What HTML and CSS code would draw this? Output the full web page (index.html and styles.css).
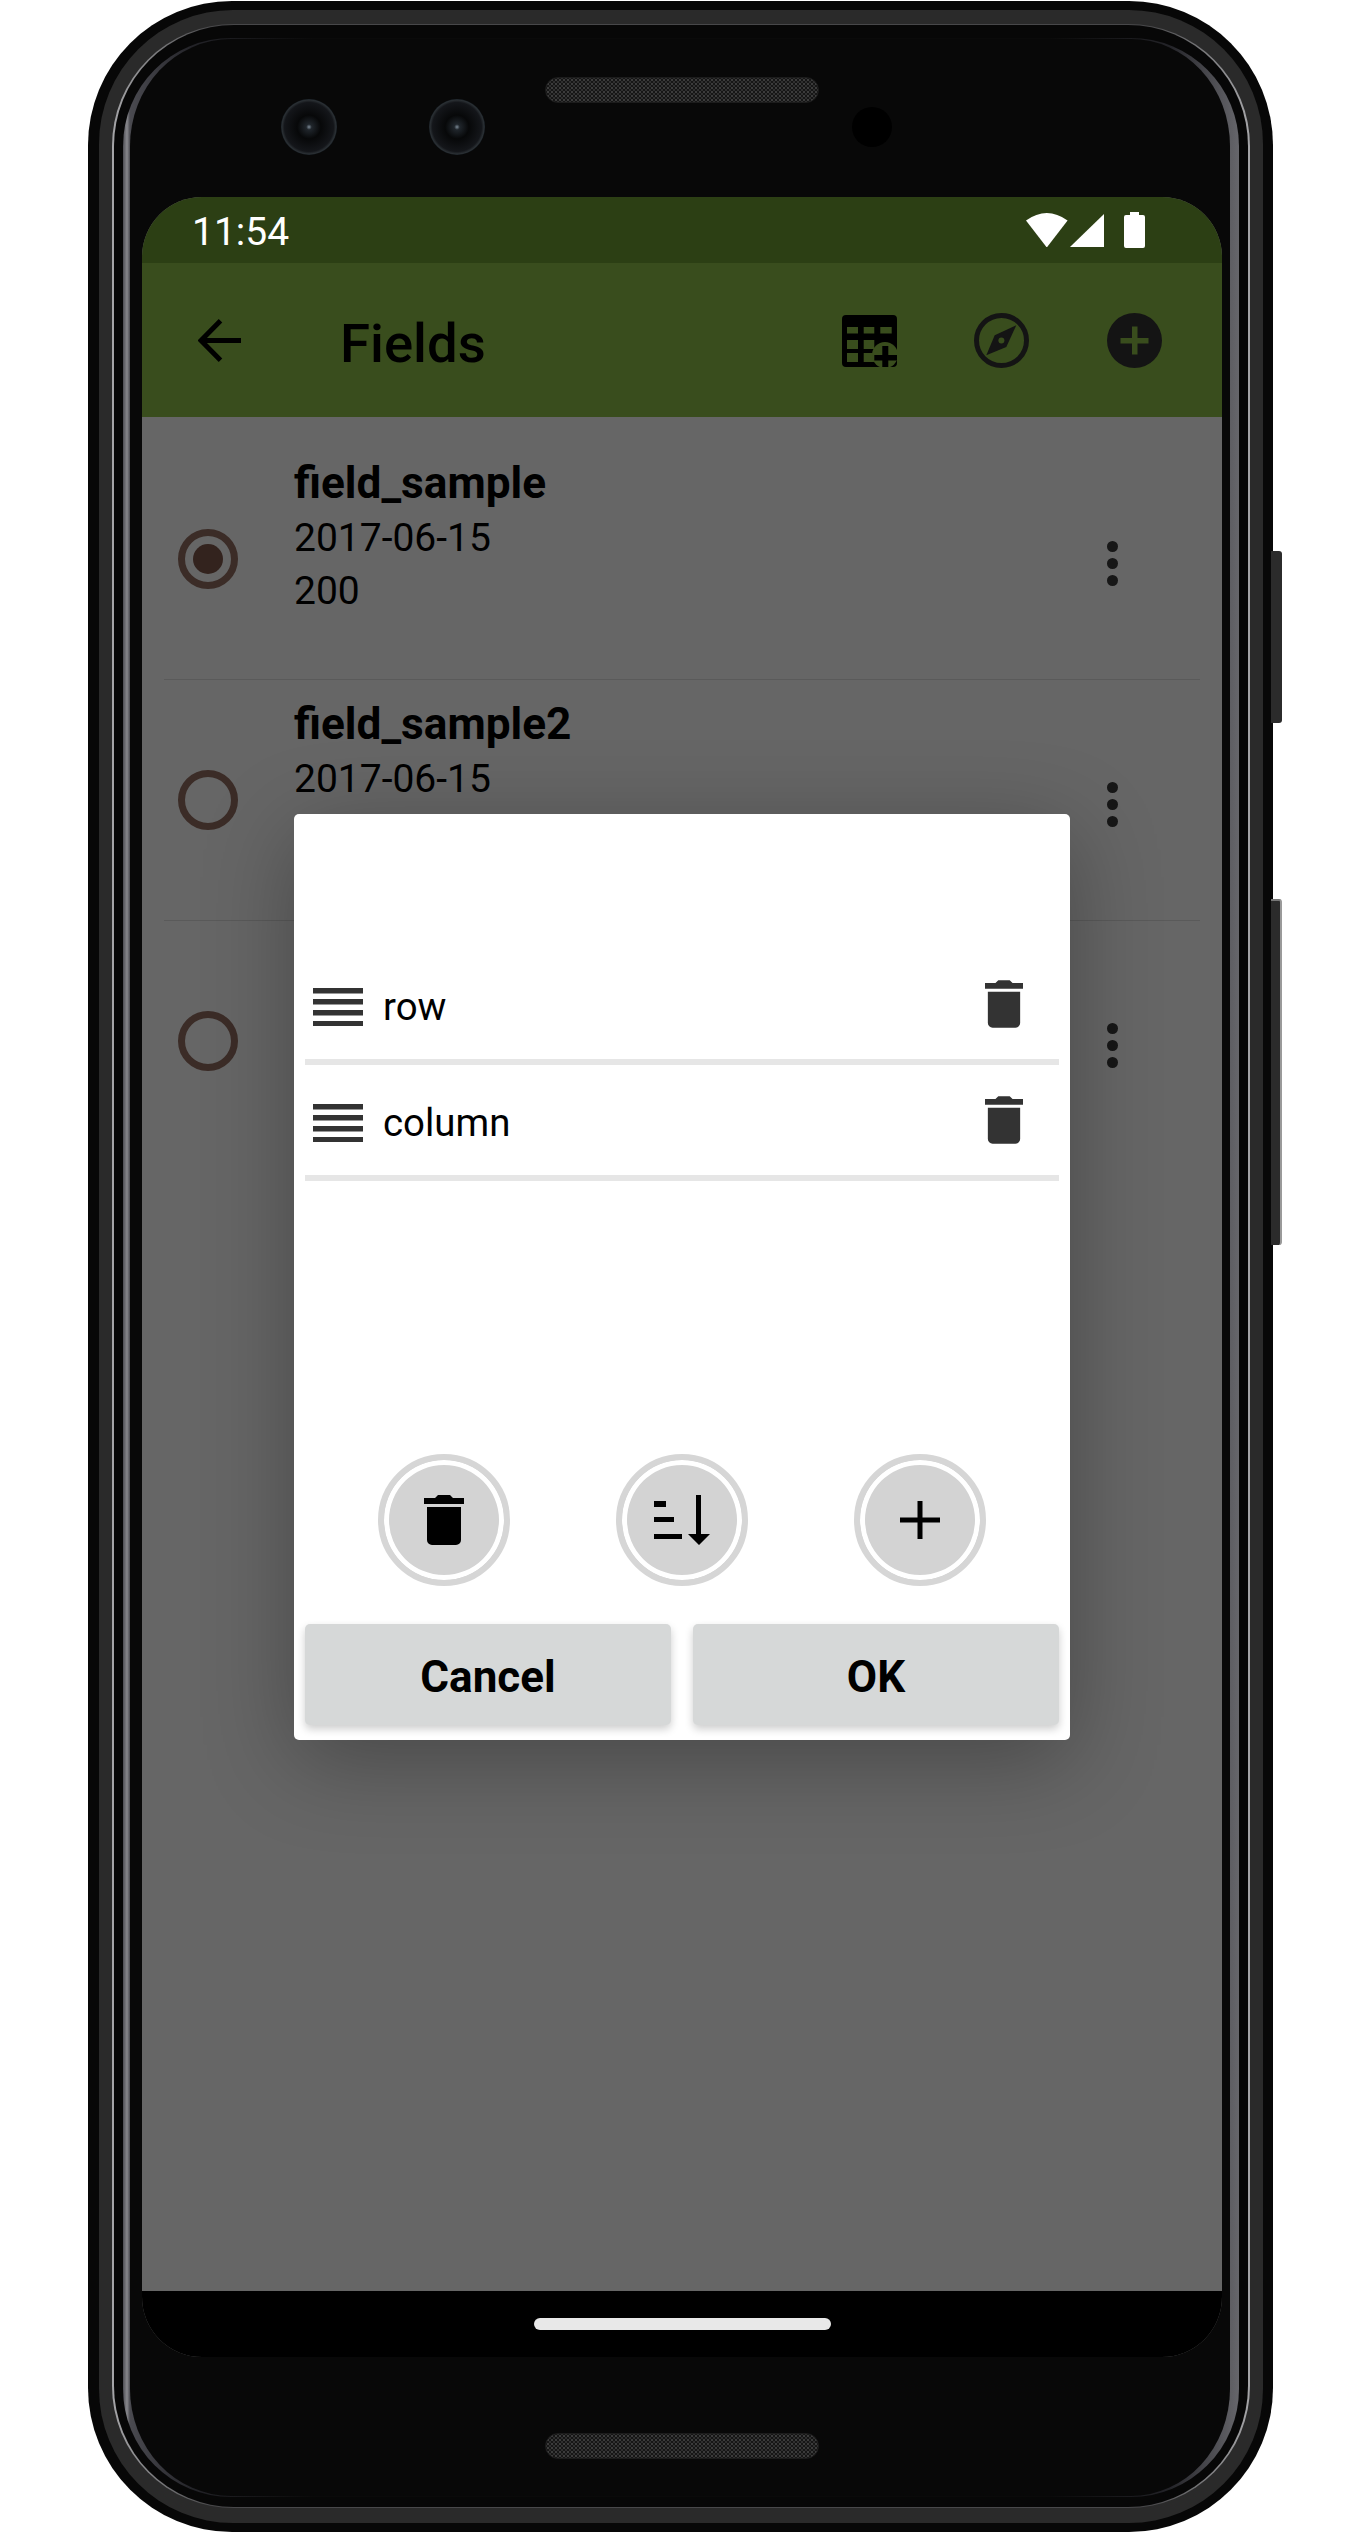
FILE: index.html
```html
<!DOCTYPE html>
<html lang="en">
<head>
    <meta charset="UTF-8">
    <meta name="viewport" content="width=device-width, initial-scale=1.0">
    <title>Fields</title>
    <link rel="stylesheet" href="styles.css">
</head>
<body>
    <div class="phone">
        <div class="side-key side-key-power"></div>
        <div class="side-key side-key-volume"></div>
        <div class="band">
            <div class="rim">
                <div class="glass">
                    <div class="bezel-top">
                        <div class="camera"></div>
                        <div class="camera camera-second"></div>
                        <div class="speaker"></div>
                        <div class="sensor"></div>
                    </div>

                    <div class="screen">
                        <div class="status-bar">
                            <span class="clock">11:54</span>
                            <div class="status-icons">
                                <svg class="icon-wifi" viewBox="0 0 41.6 34.5"><path d="M20.8 34.5L0 7.5Q20.8-7.5 41.6 7.5Z"/></svg>
                                <svg class="icon-signal" viewBox="0 0 34 33"><path d="M0 33L34 0V33Z"/></svg>
                                <svg class="icon-battery" viewBox="0 0 21 36"><path d="M6 0h9v3h4a2 2 0 0 1 2 2v29a2 2 0 0 1-2 2H2a2 2 0 0 1-2-2V5a2 2 0 0 1 2-2h4z"/></svg>
                            </div>
                        </div>

                        <header class="toolbar">
                            <svg class="icon-back" viewBox="0 0 43 43"><path d="M43 21.5H4M22.5 1.8L3 21.5l19.5 19.7" fill="none" stroke="#000" stroke-width="5"/></svg>
                            <h1 class="toolbar-title">Fields</h1>
                            <svg class="icon-table" viewBox="0 0 55 52">
                                <path fill-rule="evenodd" d="M4 0h47a4 4 0 0 1 4 4v44a4 4 0 0 1-4 4H4a4 4 0 0 1-4-4V4a4 4 0 0 1 4-4zM5 12v6.500h11V12zM21.700 12v6.500h10.600V12zM38.300 12v6.500h11.400V12zM5 25v9h11v-9zM21.700 25v9h10.600v-9zM5 38v9h11v-9zM21.700 38v9h10.600v-9z"/>
                                <circle cx="43" cy="40" r="13" fill="#394d1d"/>
                                <path d="M40.300 31h6v9h8.700v5.500h-8.700V52.600h-6V45.500H32.300V40h8z"/>
                            </svg>
                            <svg class="icon-compass" viewBox="0 0 55 55">
                                <circle cx="27.500" cy="27.500" r="25" fill="none" stroke="#141414" stroke-width="5"/>
                                <path d="M42.300 12.300L32.300 34 12.300 42.300 20.700 22.300Z" fill="#141414"/>
                                <circle cx="27.400" cy="27.400" r="3" fill="#394d1d"/>
                            </svg>
                            <svg class="icon-add" viewBox="0 0 55 55">
                                <circle cx="27.500" cy="27.500" r="27.500" fill="#141414"/>
                                <path d="M13.500 25h28v5.500h-28zM25 13.500h5.500v28H25z" fill="#394d1d"/>
                            </svg>
                        </header>

                        <main class="content">
                            <div class="field-row">
                                <div class="radio radio-on"></div>
                                <div class="field-text">
                                    <div class="field-name">field_sample</div>
                                    <div class="field-line">2017-06-15</div>
                                    <div class="field-line">200</div>
                                </div>
                                <div class="kebab"><i></i><i></i><i></i></div>
                            </div>
                            <div class="field-row">
                                <div class="radio"></div>
                                <div class="field-text">
                                    <div class="field-name">field_sample2</div>
                                    <div class="field-line">2017-06-15</div>
                                </div>
                                <div class="kebab"><i></i><i></i><i></i></div>
                            </div>
                            <div class="field-row field-row-last">
                                <div class="radio"></div>
                                <div class="field-text"></div>
                                <div class="kebab"><i></i><i></i><i></i></div>
                            </div>

                            <div class="dialog">
                                <div class="sort-item">
                                    <svg class="icon-handle" viewBox="0 0 50 38"><path d="M0 0h50v5.500H0zM0 11h50v5.500H0zM0 22h50v5.500H0zM0 33h50v5H0z"/></svg>
                                    <span class="sort-label">row</span>
                                    <svg class="icon-trash" viewBox="0 0 40 50"><path d="M14 0h12l3 3h11v6H0V3h11zM3 12h34v33a5 5 0 0 1-5 5H8a5 5 0 0 1-5-5z"/></svg>
                                </div>
                                <div class="sort-item">
                                    <svg class="icon-handle" viewBox="0 0 50 38"><path d="M0 0h50v5.500H0zM0 11h50v5.500H0zM0 22h50v5.500H0zM0 33h50v5H0z"/></svg>
                                    <span class="sort-label">column</span>
                                    <svg class="icon-trash" viewBox="0 0 40 50"><path d="M14 0h12l3 3h11v6H0V3h11zM3 12h34v33a5 5 0 0 1-5 5H8a5 5 0 0 1-5-5z"/></svg>
                                </div>

                                <div class="round-actions">
                                    <div class="round-btn">
                                        <svg class="icon-trash-black" viewBox="0 0 40 50"><path d="M14 0h12l3 3h11v6H0V3h11zM3 12h34v33a5 5 0 0 1-5 5H8a5 5 0 0 1-5-5z"/></svg>
                                    </div>
                                    <div class="round-btn">
                                        <svg class="icon-sort" viewBox="0 0 56 50"><path d="M0 6h12v6H0zM0 22h20v5H0zM0 39h28v5H0zM42 0h5v40h-5zM34 39h22L45 50z"/></svg>
                                    </div>
                                    <div class="round-btn">
                                        <svg class="icon-plus" viewBox="0 0 40 38"><path d="M0 16.500h40v5H0zM17.500 0h5v38h-5z"/></svg>
                                    </div>
                                </div>

                                <div class="dialog-buttons">
                                    <button class="dialog-btn">Cancel</button>
                                    <button class="dialog-btn">OK</button>
                                </div>
                            </div>
                        </main>

                        <div class="nav-bar">
                            <div class="home-pill"></div>
                        </div>
                    </div>

                    <div class="bezel-bottom">
                        <div class="speaker"></div>
                    </div>
                </div>
            </div>
        </div>
    </div>
</body>
</html>
```

FILE: styles.css
```css
* {
    box-sizing: border-box;
}
body {
    margin: 0;
    background-color: #ffffff;
    font-family: Roboto, "Liberation Sans", sans-serif;
}

/* phone body, outside to inside */
.phone {
    position: relative;
    width: 1185px;
    height: 2531px;
    margin: 1px 0 0 88px;
    padding: 9px 10px 9px 11px;
    background-color: #070707;
    border-radius: 144px;
}
.band {
    height: 100%;
    padding: 14px 13px 15px 13px;
    background-color: #2a2a2a;
    border-radius: 134px;
}
.rim {
    height: 100%;
    padding: 13px 9px 10px 9px;
    border-style: solid;
    border-color: transparent;
    border-width: 1px 2px;
    border-radius: 122px;
    background:
        linear-gradient(#070707, #070707) padding-box,
        linear-gradient(90deg, #a5a5a8 0, #48484a 100px, #48484a calc(100% - 100px), #a5a5a8 100%) border-box;
}
.glass {
    display: flex;
    flex-direction: column;
    height: 100%;
    padding: 0 8px 0 12px;
    border-style: solid;
    border-color: transparent;
    border-width: 1px 9px 1px 7px;
    border-radius: 108px;
    background:
        linear-gradient(#080808, #080808) padding-box,
        linear-gradient(90deg, #4e4e54 0, #88888d 4px, #4a4a50 7px, #232328 70px, #0a0a0a 190px, #0a0a0a calc(100% - 190px), #232328 calc(100% - 70px), #66666b 100%) border-box;
}

.side-key {
    position: absolute;
    right: -9px;
    width: 11px;
    background-color: #2b2b2b;
    border-radius: 0 3px 3px 0;
}
.side-key-power {
    top: 550px;
    height: 172px;
}
.side-key-volume {
    top: 898px;
    height: 346px;
    border-right: 2px solid #9a9a9a;
    border-top: 2px solid #777777;
}

.bezel-top {
    display: flex;
    align-items: flex-start;
    flex: none;
    height: 158px;
    padding-left: 139px;
}
.camera {
    flex: none;
    width: 56px;
    height: 56px;
    margin-top: 60px;
    border-radius: 50%;
    background: radial-gradient(circle, #7c8a96 0, #20262c 7%, #070809 30%, #14161a 62%, #2a2f33 68%, #1a2229 71%);
}
.camera-second {
    margin-left: 92px;
}
.speaker {
    flex: none;
    width: 274px;
    height: 26px;
    border: 1px solid #1c1c1c;
    border-radius: 13px;
    background-color: #161616;
    background-image:
        radial-gradient(circle, #3c3c3c 1px, transparent 1.5px),
        radial-gradient(circle, #303030 1px, transparent 1.5px);
    background-size: 4px 4px;
    background-position: 0 0, 2px 2px;
}
.bezel-top .speaker {
    margin: 38px 0 0 60px;
}
.sensor {
    flex: none;
    width: 40px;
    height: 40px;
    margin: 68px 0 0 33px;
    border-radius: 50%;
    background-color: #000000;
}
.bezel-bottom {
    display: flex;
    justify-content: center;
    flex: none;
    padding-top: 76px;
}

/* screen */
.screen {
    display: flex;
    flex-direction: column;
    flex: none;
    height: 2160px;
    overflow: hidden;
    border-radius: 60px;
    background-color: #666666;
}
.status-bar {
    display: flex;
    align-items: center;
    justify-content: space-between;
    flex: none;
    height: 66px;
    padding: 0 77px 0 50px;
    background-color: #2c3f14;
}
.clock {
    margin-top: 4px;
    font-size: 39px;
    color: #ffffff;
}
.status-icons {
    display: flex;
    align-items: center;
    fill: #ffffff;
}
.icon-wifi {
    width: 41.6px;
    height: 34.5px;
}
.icon-signal {
    width: 34px;
    height: 33px;
    margin-left: 2.5px;
}
.icon-battery {
    width: 21px;
    height: 36px;
    margin-left: 20px;
}

.toolbar {
    display: flex;
    align-items: center;
    flex: none;
    height: 154px;
    padding: 0 60px 0 56px;
    background-color: #394d1d;
}
.icon-back {
    width: 43px;
    height: 43px;
}
.toolbar-title {
    flex: 1;
    margin: 6px 0 0 99px;
    font-size: 54.5px;
    font-weight: 500;
    color: #000000;
}
.icon-table {
    width: 55px;
    height: 52px;
    margin-top: 2px;
}
.icon-compass {
    width: 55px;
    height: 55px;
    margin-left: 77px;
}
.icon-add {
    width: 55px;
    height: 55px;
    margin-left: 78px;
}

/* list behind the dialog */
.content {
    position: relative;
    flex: 1;
    padding-top: 22px;
}
.field-row {
    display: flex;
    align-items: center;
    position: relative;
    height: 241px;
    padding: 0 104px 0 36px;
    border-bottom: 1px solid transparent;
}
.field-row::after {
    content: "";
    position: absolute;
    left: 22px;
    right: 22px;
    bottom: -1px;
    height: 1px;
    background-color: #5a5a5a;
}
.field-row-last::after {
    display: none;
}
.radio {
    flex: none;
    display: flex;
    align-items: center;
    justify-content: center;
    width: 60px;
    height: 60px;
    border: 7px solid #3b2c27;
    border-radius: 50%;
}
.radio-on::before {
    content: "";
    width: 30px;
    height: 30px;
    border-radius: 50%;
    background-color: #33231e;
}
.field-text {
    flex: 1;
    align-self: flex-start;
    padding: 16px 0 0 56px;
    color: #000000;
}
.field-name {
    font-size: 44.2px;
    font-weight: 700;
    line-height: 57px;
}
.field-line {
    font-size: 39px;
    line-height: 53px;
}
.kebab {
    display: flex;
    flex-direction: column;
    flex: none;
    gap: 6px;
    margin-top: 8px;
}
.kebab i {
    width: 11px;
    height: 11px;
    border-radius: 50%;
    background-color: #171717;
}

/* dialog */
.dialog {
    position: absolute;
    top: 397px;
    left: 152px;
    display: flex;
    flex-direction: column;
    width: 776px;
    height: 926px;
    padding: 135px 11px 15px 11px;
    border-radius: 5px;
    background-color: #ffffff;
    box-shadow: 0 20px 90px rgba(0, 0, 0, 0.3);
}
.sort-item {
    display: flex;
    align-items: center;
    flex: none;
    height: 116px;
    padding: 0 36px 0 8px;
    border-bottom: 6px solid #e6e6e6;
}
.icon-handle {
    flex: none;
    width: 50px;
    height: 38px;
    margin-top: 6px;
    fill: #333333;
}
.sort-label {
    flex: 1;
    margin: 5px 0 0 20px;
    font-size: 38.4px;
    color: #000000;
}
.icon-trash {
    flex: none;
    width: 38px;
    height: 50px;
    fill: #333333;
}
.round-actions {
    display: flex;
    justify-content: center;
    gap: 106px;
    flex: none;
    margin-top: auto;
    margin-bottom: 38px;
}
.round-btn {
    display: flex;
    align-items: center;
    justify-content: center;
    flex: none;
    width: 132px;
    height: 132px;
    border: 6px solid #d6d6d6;
    border-radius: 50%;
    background-color: #d3d3d3;
    box-shadow: inset 0 0 0 5px #ffffff;
}
.icon-trash-black {
    width: 40px;
    height: 50px;
}
.icon-sort {
    width: 56px;
    height: 50px;
}
.icon-plus {
    width: 40px;
    height: 38px;
}
.dialog-buttons {
    display: flex;
    gap: 22px;
    flex: none;
}
.dialog-btn {
    flex: 1;
    height: 101px;
    padding: 5px 0 0 0;
    border: none;
    border-radius: 5px;
    background-color: #d6d8d8;
    box-shadow: 0 4px 8px rgba(0, 0, 0, 0.2);
    font-family: Roboto, "Liberation Sans", sans-serif;
    font-size: 44px;
    font-weight: 700;
    color: #000000;
}

.nav-bar {
    display: flex;
    justify-content: center;
    flex: none;
    height: 66px;
    padding-top: 27px;
    background-color: #000000;
}
.home-pill {
    width: 297px;
    height: 12px;
    border-radius: 6px;
    background-color: #e8e8e8;
}
```
